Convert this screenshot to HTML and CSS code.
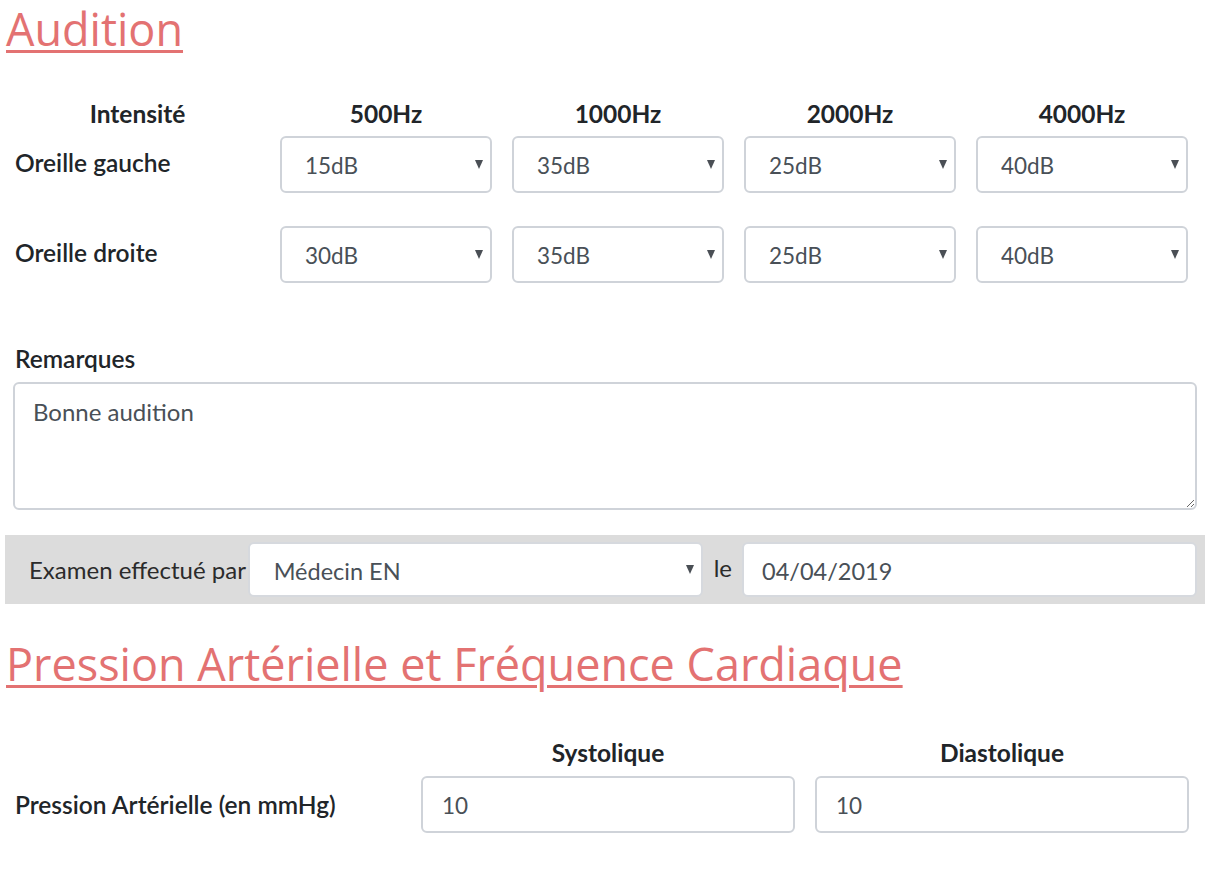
FILE: index.html
```html
<!DOCTYPE html>
<html lang="fr">
<head>
<meta charset="utf-8">
<title>Audition</title>
<link rel="stylesheet" href="styles.css">
</head>
<body>
<div class="page">
  <h2 class="section-title">Audition</h2>

  <div class="hear-grid">
    <div class="col-head">Intensité</div>
    <div class="col-head">500Hz</div>
    <div class="col-head">1000Hz</div>
    <div class="col-head">2000Hz</div>
    <div class="col-head">4000Hz</div>

    <div class="row-label">Oreille gauche</div>
    <div class="sel"><select><option>15dB</option></select></div>
    <div class="sel"><select><option>35dB</option></select></div>
    <div class="sel"><select><option>25dB</option></select></div>
    <div class="sel"><select><option>40dB</option></select></div>

    <div class="row-label row2">Oreille droite</div>
    <div class="sel row2"><select><option>30dB</option></select></div>
    <div class="sel row2"><select><option>35dB</option></select></div>
    <div class="sel row2"><select><option>25dB</option></select></div>
    <div class="sel row2"><select><option>40dB</option></select></div>
  </div>

  <div class="remarks">
    <label class="row-label">Remarques</label>
    <textarea class="textarea">Bonne audition</textarea>
  </div>

  <div class="exam-bar">
    <span class="exam-text">Examen effectué par</span>
    <div class="sel exam-sel"><select><option>Médecin EN</option></select></div>
    <span class="exam-text le">le</span>
    <input class="field exam-date" type="text" value="04/04/2019">
  </div>

  <h2 class="section-title second">Pression Artérielle et Fréquence Cardiaque</h2>

  <div class="bp-grid">
    <div></div>
    <div class="col-head">Systolique</div>
    <div class="col-head">Diastolique</div>
    <div class="row-label">Pression Artérielle (en mmHg)</div>
    <input class="field" type="text" value="10">
    <input class="field" type="text" value="10">
  </div>
</div>
</body>
</html>
```

FILE: styles.css
```css
* { box-sizing: border-box; }

body {
  margin: 0;
  font-family: "Lato", "Open Sans", sans-serif;
  color: #212529;
  background: #fff;
}

.page {
  padding: 0 4px 0 5px;
}

.section-title {
  margin: 0;
  padding-top: 2px;
  font-family: "Open Sans", sans-serif;
  font-weight: 400;
  font-size: 45px;
  line-height: 54px;
  color: #e37272;
  text-decoration: underline;
  text-decoration-thickness: 3px;
  text-underline-offset: 4px;
  padding-left: 1px;
}

.hear-grid {
  display: grid;
  grid-template-columns: 245px repeat(4, 212px);
  column-gap: 20px;
  margin-top: 44px;
  padding-left: 10px;
  align-items: center;
}

.col-head {
  font-weight: 700;
  font-size: 24.5px;
  line-height: 28px;
  text-align: center;
  margin-bottom: 8px;
}

.row-label {
  font-weight: 600;
  font-size: 24.5px;
  line-height: 28px;
  color: #212529;
}

.hear-grid .row-label { align-self: start; padding-top: 13px; }
.row2 { margin-top: 33px; }

.field,
.sel select {
  display: block;
  width: 100%;
  height: 57px;
  border: 2px solid #cfd3d9;
  border-radius: 6px;
  background: #fff;
  font-family: inherit;
  font-size: 22.5px;
  color: #495057;
}

.sel {
  position: relative;
  height: 57px;
}
.sel::after {
  content: "";
  position: absolute;
  right: 9px;
  top: 50%;
  margin-top: -5px;
  border-left: 4.5px solid transparent;
  border-right: 4.5px solid transparent;
  border-top: 9px solid #4a4f55;
  pointer-events: none;
}
.sel select {
  appearance: none;
  -webkit-appearance: none;
  padding: 2px 24px 0 23px;
}

.remarks {
  margin-top: 62px;
  padding-left: 8px;
  display: flex;
  flex-direction: column;
}
.remarks .row-label { padding-left: 2px; margin-bottom: 9px; }

.textarea {
  width: 1184px;
  height: 128px;
  border: 2px solid #cfd3d9;
  border-radius: 6px;
  padding: 14px 18px;
  font-family: inherit;
  font-size: 24px;
  line-height: 28px;
  color: #495057;
  resize: vertical;
}

.exam-bar {
  margin-top: 25px;
  width: 1200px;
  height: 69px;
  background: #dcdcdc;
  display: flex;
  align-items: center;
  padding: 0 8px 0 24px;
}
.exam-text {
  font-size: 24px;
  color: #2b2b2b;
  white-space: nowrap;
  flex: 1 1 auto;
}
.exam-sel {
  width: 455px;
  height: 55px;
  flex: none;
}
.exam-sel select,
.exam-bar .exam-date {
  height: 55px;
  border-color: #d6d9de;
  font-size: 23.5px;
}
.exam-sel select { padding-left: 24px; }
.exam-text.le {
  flex: none;
  margin-left: 11px;
  margin-right: 10px;
  padding-bottom: 5px;
}
.exam-bar .exam-date {
  width: 455px;
  flex: none;
  padding-left: 18px;
}

.field {
  padding: 2px 19px 0;
}

.second { margin-top: 31px; }

.bp-grid {
  display: grid;
  grid-template-columns: 386px 374px 374px;
  column-gap: 20px;
  margin-top: 48px;
  padding-left: 10px;
  align-items: center;
}
.bp-grid .col-head { margin-bottom: 9px; }
```
